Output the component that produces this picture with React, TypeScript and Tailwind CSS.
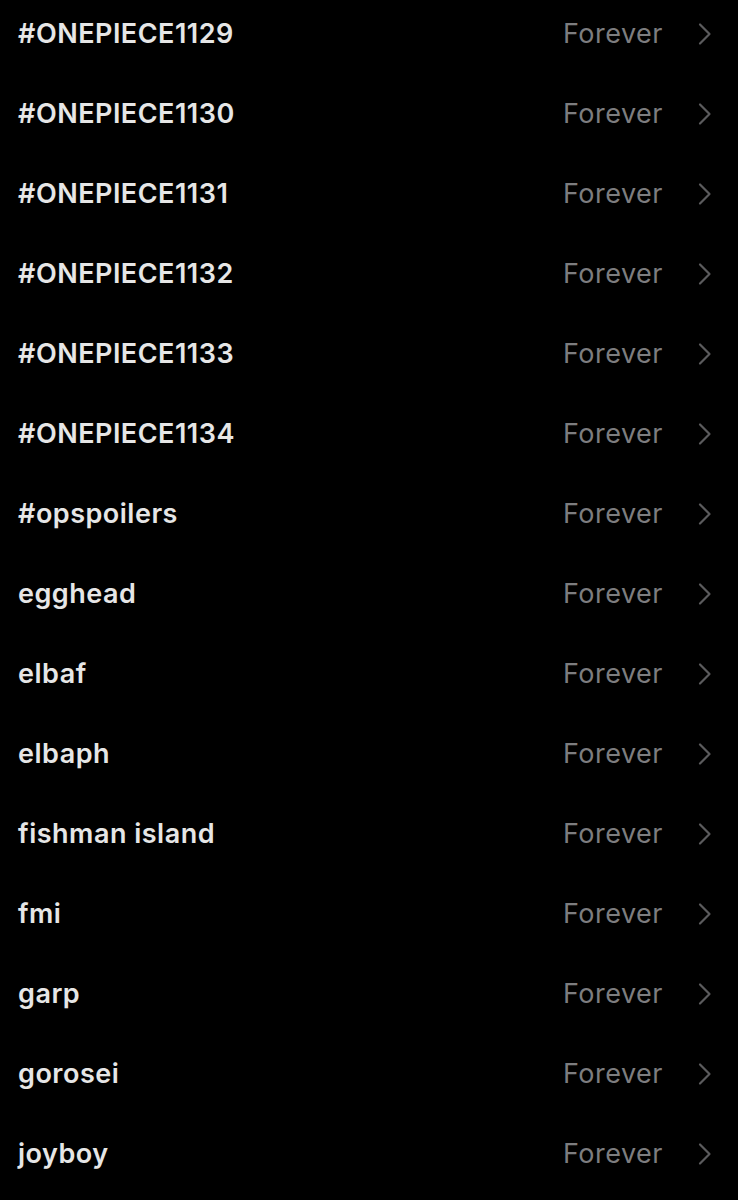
const ITEMS = [
  '#ONEPIECE1129',
  '#ONEPIECE1130',
  '#ONEPIECE1131',
  '#ONEPIECE1132',
  '#ONEPIECE1133',
  '#ONEPIECE1134',
  '#opspoilers',
  'egghead',
  'elbaf',
  'elbaph',
  'fishman island',
  'fmi',
  'garp',
  'gorosei',
  'joyboy',
]

function Chevron() {
  return (
    <svg width="14" height="24" viewBox="0 0 14 24" fill="none" className="shrink-0">
      <path d="M2 2.5 L11.5 12 L2 21.5" stroke="#5b5b5d" strokeWidth="2.2" strokeLinecap="round" strokeLinejoin="round" />
    </svg>
  )
}

export default function App() {
  return (
    <div className="w-[738px] h-[1200px] bg-black overflow-hidden" style={{ fontFamily: 'Inter, "Noto Sans", sans-serif' }}>
      <div className="-mt-[6px] flex flex-col">
        {ITEMS.map((item) => (
          <div key={item} className="h-20 flex items-center pl-[18px] pr-[26px]">
            <span className="flex-1 text-[27px] font-semibold text-[#e6e6e6] tracking-[0.5px]">{item}</span>
            <span className="text-[27px] text-[#7d7d7f] mr-[35px] tracking-[0.5px]">Forever</span>
            <Chevron />
          </div>
        ))}
      </div>
    </div>
  )
}
